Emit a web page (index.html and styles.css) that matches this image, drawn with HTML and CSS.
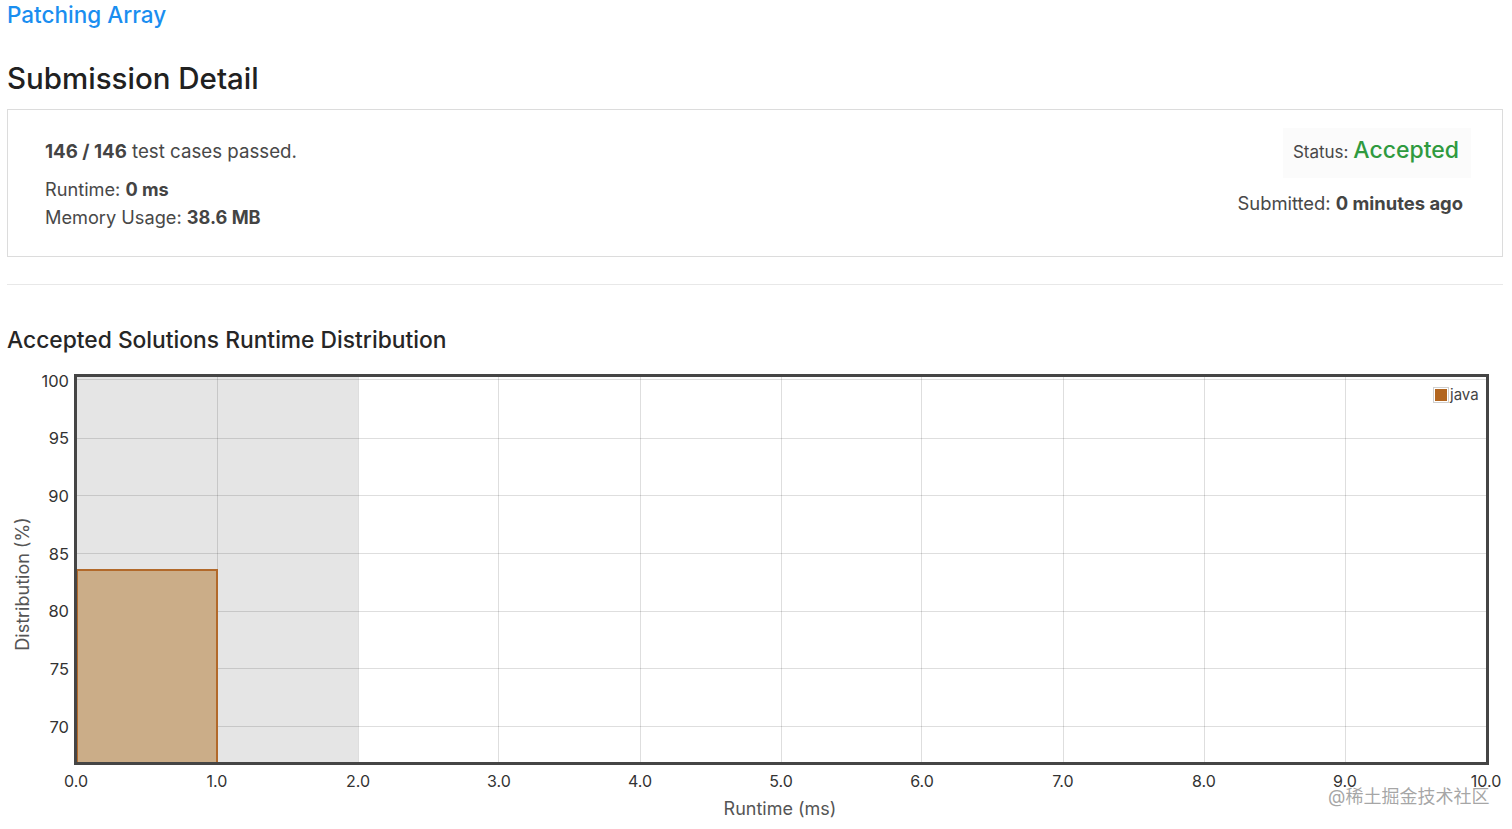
FILE: index.html
```html
<!DOCTYPE html>
<html lang="en">
<head>
<meta charset="utf-8">
<title>Submission Detail</title>
<link rel="stylesheet" href="styles.css">
</head>
<body>
<div class="page">
  <a class="problem-link" href="#">Patching Array</a>
  <h1 class="page-title">Submission Detail</h1>
  <div class="card">
    <div class="card-left">
      <div class="cases"><b>146&nbsp;/&nbsp;146</b> test cases passed.</div>
      <div class="stat">Runtime: <b>0 ms</b></div>
      <div class="stat">Memory Usage: <b>38.6 MB</b></div>
    </div>
    <div class="card-right">
      <div class="status">Status: <span class="accepted">Accepted</span></div>
      <div class="submitted">Submitted: <b>0 minutes ago</b></div>
    </div>
  </div>
  <hr class="divider">
  <h2 class="chart-title">Accepted Solutions Runtime Distribution</h2>
  <div class="chart">
    <svg class="chart-svg" viewBox="7 365 1505 464" width="1505" height="464">
      <rect x="76" y="376" width="1411" height="386" fill="#ffffff"/>
      <rect x="76" y="376" width="282" height="386" fill="#e5e5e5"/>
      <g stroke="#000" stroke-opacity="0.13" stroke-width="1">
        <line x1="76" y1="378.5" x2="1487" y2="378.5"/>
        <line x1="76" y1="437.5" x2="1487" y2="437.5"/>
        <line x1="76" y1="494.5" x2="1487" y2="494.5"/>
        <line x1="76" y1="552.5" x2="1487" y2="552.5"/>
        <line x1="76" y1="610.5" x2="1487" y2="610.5"/>
        <line x1="76" y1="667.5" x2="1487" y2="667.5"/>
        <line x1="76" y1="725.5" x2="1487" y2="725.5"/>
        <line x1="217.5" y1="376" x2="217.5" y2="762"/>
        <line x1="358.5" y1="376" x2="358.5" y2="762"/>
        <line x1="498.5" y1="376" x2="498.5" y2="762"/>
        <line x1="640.5" y1="376" x2="640.5" y2="762"/>
        <line x1="781.5" y1="376" x2="781.5" y2="762"/>
        <line x1="921.5" y1="376" x2="921.5" y2="762"/>
        <line x1="1063.5" y1="376" x2="1063.5" y2="762"/>
        <line x1="1204.5" y1="376" x2="1204.5" y2="762"/>
        <line x1="1345.5" y1="376" x2="1345.5" y2="762"/>
      </g>
      <rect x="77" y="569" width="140" height="193" fill="#cbad88" stroke="#b2692a" stroke-width="2"/>
      <rect x="75.5" y="374.5" width="1412" height="388" fill="none" stroke="#454545" stroke-width="3"/>
      <rect x="1433.5" y="386.5" width="15" height="15" fill="#fff" stroke="#cfcfcf" stroke-width="1"/>
      <rect x="1435" y="388" width="12" height="12" fill="#b2651f"/>
      <text class="legend" x="1450" y="399">java</text>
      <g class="ytick" text-anchor="end">
        <text x="69" y="386">100</text>
        <text x="69" y="443">95</text>
        <text x="69" y="501">90</text>
        <text x="69" y="559">85</text>
        <text x="69" y="616">80</text>
        <text x="69" y="674">75</text>
        <text x="69" y="732">70</text>
      </g>
      <g class="xtick" text-anchor="middle">
        <text x="76" y="786">0.0</text>
        <text x="217" y="786">1.0</text>
        <text x="358" y="786">2.0</text>
        <text x="499" y="786">3.0</text>
        <text x="640" y="786">4.0</text>
        <text x="781" y="786">5.0</text>
        <text x="922" y="786">6.0</text>
        <text x="1063" y="786">7.0</text>
        <text x="1204" y="786">8.0</text>
        <text x="1345" y="786">9.0</text>
        <text x="1486" y="786">10.0</text>
      </g>
      <text class="axis-title" x="780" y="814" text-anchor="middle">Runtime (ms)</text>
      <text class="axis-title" x="0" y="0" text-anchor="middle" transform="translate(29 583) rotate(-90)">Distribution (%)</text>
    </svg>
    <span class="watermark">@稀土掘金技术社区</span>
  </div>
</div>
</body>
</html>
```
FILE: styles.css
```css
html, body {
  margin: 0;
  padding: 0;
  background: #ffffff;
}
body {
  font-family: Inter, "Liberation Sans", "Noto Sans CJK SC", sans-serif;
  color: #333333;
}
.page {
  padding: 0 9px 0 7px;
  display: flex;
  flex-direction: column;
}
.problem-link {
  font-size: 22.5px;
  line-height: 30px;
  color: #1a8ef0;
  text-decoration: none;
  font-weight: 500;
  align-self: flex-start;
}
.page-title {
  margin: 28px 0 0;
  font-size: 29.5px;
  line-height: 40px;
  font-weight: 500;
  color: #212121;
}
.card {
  margin-top: 11px;
  border: 1px solid #dcdcdc;
  box-sizing: border-box;
  height: 148px;
  display: flex;
  justify-content: space-between;
  padding: 0 39px 0 37px;
}
.card-left {
  display: flex;
  flex-direction: column;
  padding-top: 30px;
  color: #484848;
}
.cases {
  font-size: 18.7px;
  line-height: 24px;
  margin-bottom: 11px;
}
.cases b, .stat b, .submitted b {
  font-weight: 700;
  color: #444444;
}
.stat {
  font-size: 18.2px;
  line-height: 28px;
}
.card-right {
  display: flex;
  flex-direction: column;
  align-items: flex-end;
  padding-top: 18px;
  color: #484848;
}
.status {
  background: #fbfbfb;
  padding: 9px 12px 13px 10px;
  margin-right: -8px;
  font-size: 17px;
  line-height: 26px;
}
.accepted {
  color: #2f9a3f;
  font-size: 23px;
  font-weight: 500;
}
.submitted {
  margin-top: 13px;
  font-size: 18.4px;
  line-height: 24px;
}
.divider {
  margin: 27px 0 0;
  border: 0;
  border-top: 1px solid #e8e8e8;
  height: 0;
}
.chart-title {
  margin: 40px 0 0;
  font-size: 22.8px;
  line-height: 30px;
  font-weight: 500;
  color: #262626;
}
.chart {
  position: relative;
  margin-top: 11px;
  width: 1505px;
}
.chart-svg {
  display: block;
}
.ytick text, .xtick text {
  font-family: Inter, "Liberation Sans", sans-serif;
  font-size: 16.5px;
  fill: #333333;
}
.xtick text {
  font-size: 16px;
}
.legend {
  font-family: Inter, "Liberation Sans", sans-serif;
  font-size: 15px;
  fill: #444444;
}
.axis-title {
  font-family: Inter, "Liberation Sans", sans-serif;
  font-size: 18px;
  fill: #555555;
}
.watermark {
  position: absolute;
  left: 1321px;
  top: 419px;
  font-size: 18px;
  line-height: 24px;
  color: rgba(150, 150, 150, 0.85);
  font-family: Inter, "Noto Sans CJK SC", sans-serif;
  white-space: nowrap;
}
```
